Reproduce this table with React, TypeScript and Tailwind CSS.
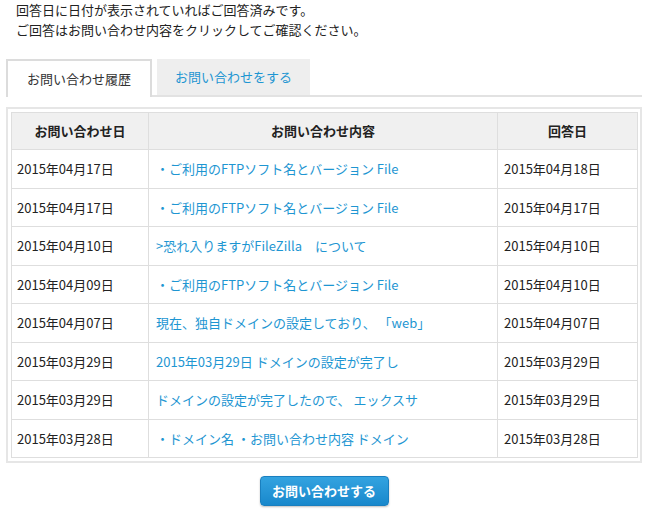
import React from 'react'

const rows = [
  { date: '2015年04月17日', title: '・ご利用のFTPソフト名とバージョン File', answer: '2015年04月18日' },
  { date: '2015年04月17日', title: '・ご利用のFTPソフト名とバージョン File', answer: '2015年04月17日' },
  { date: '2015年04月10日', title: '>恐れ入りますがFileZilla　について', answer: '2015年04月10日' },
  { date: '2015年04月09日', title: '・ご利用のFTPソフト名とバージョン File', answer: '2015年04月10日' },
  { date: '2015年04月07日', title: '現在、独自ドメインの設定しており、 「web」', answer: '2015年04月07日' },
  { date: '2015年03月29日', title: '2015年03月29日 ドメインの設定が完了し', answer: '2015年03月29日' },
  { date: '2015年03月29日', title: 'ドメインの設定が完了したので、 エックスサ', answer: '2015年03月29日' },
  { date: '2015年03月28日', title: '・ドメイン名 ・お問い合わせ内容 ドメイン', answer: '2015年03月28日' },
]

export default function App() {
  return (
    <div className="w-[648px] h-[513px] bg-white text-[13px] text-[#222] font-['Noto_Sans_CJK_JP','Noto_Sans',sans-serif] overflow-hidden">
      <div className="pl-4 leading-[20px]">
        <p>回答日に日付が表示されていればご回答済みです。</p>
        <p>ご回答はお問い合わせ内容をクリックしてご確認ください。</p>
      </div>

      <div className="mt-[19px] ml-[6px] mr-[6px] flex items-end gap-[5px] border-b-2 border-[#e2e2e2] h-[38px]">
        <div className="w-[146px] h-[38px] -mb-[2px] bg-white border-2 border-b-0 border-[#dcdcdc] flex items-center justify-center text-[#333]">
          お問い合わせ履歴
        </div>
        <div className="w-[153px] h-[36px] bg-[#eeeeee] flex items-center justify-center text-[#1e96d2] self-start">
          お問い合わせをする
        </div>
      </div>

      <div className="mt-[10px] mx-[6px] border-2 border-[#e6e6e6] p-[3px] pr-[2px]">
        <table className="w-full border-collapse table-fixed">
          <colgroup>
            <col className="w-[137px]" />
            <col className="w-[349px]" />
            <col />
          </colgroup>
          <thead>
            <tr className="h-[37px] bg-[#f0f0f0]">
              <th className="border border-[#dedede] text-center font-bold">お問い合わせ日</th>
              <th className="border border-[#dedede] text-center font-bold">お問い合わせ内容</th>
              <th className="border border-[#dedede] text-center font-bold">回答日</th>
            </tr>
          </thead>
          <tbody>
            {rows.map((r, i) => (
              <tr key={i} className="h-[38.5px]">
                <td className="border border-[#dedede] pl-[5px]">{r.date}</td>
                <td className="border border-[#dedede] pl-[7px] text-[#1e96d2] whitespace-pre">{r.title}</td>
                <td className="border border-[#dedede] pl-[6px]">{r.answer}</td>
              </tr>
            ))}
          </tbody>
        </table>
      </div>

      <div className="flex justify-center mt-[13px]">
        <button className="w-[129px] h-[30px] rounded-[4px] border border-[#1a7fbf] bg-gradient-to-b from-[#33a3e0] to-[#1888cc] text-white font-bold text-[13px] shadow-[0_1px_2px_rgba(0,0,0,0.25)]">
          お問い合わせする
        </button>
      </div>
    </div>
  )
}
